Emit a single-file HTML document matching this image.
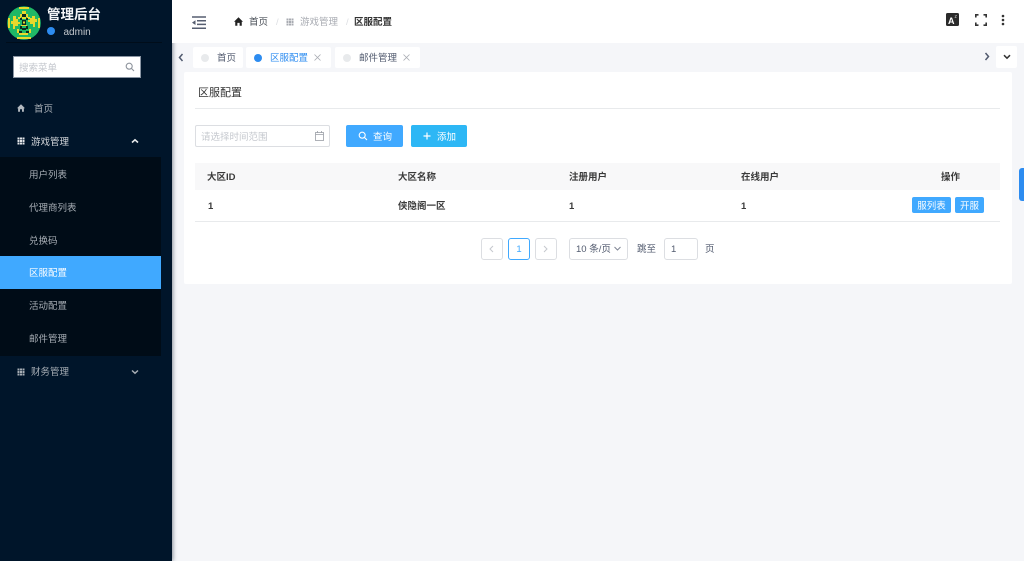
<!DOCTYPE html>
<html lang="zh"><head><meta charset="utf-8"><title>区服配置</title>
<style>
*{box-sizing:border-box;margin:0;padding:0}
html,body{width:1024px;height:561px;overflow:hidden;background:#f5f6f9;font-family:"Liberation Sans","Noto Sans CJK SC",sans-serif;color:#333}
.a{position:absolute;white-space:nowrap}
#side{position:absolute;left:0;top:0;width:172px;height:561px;background:#00152a;box-shadow:1px 0 4px rgba(0,21,41,.45)}
.m{position:absolute;font-size:9.5px;line-height:16px;white-space:nowrap;color:#a6adb4}
svg{position:absolute;display:block}
.tab{position:absolute;top:47px;height:21px;background:#fff;border-radius:2px;font-size:9.5px;line-height:24px;color:#515a6e}
.dot{position:absolute;top:6.500px;left:8px;width:8px;height:8px;border-radius:50%;background:#e8eaec}
.btn{position:absolute;height:22px;top:125px;border-radius:2px;color:#fff;font-size:9.5px;line-height:25px}
.th{position:absolute;font-size:9.5px;font-weight:700;color:#3a3a3a;line-height:16px;white-space:nowrap}
.pg{position:absolute;top:238px;height:22px;border:1px solid #dcdee2;border-radius:3px;background:#fff;font-size:9.5px;line-height:22px;color:#515a6e;text-align:center}
</style></head><body>
<div id="side">
<svg style="left:7px;top:6px" width="34" height="34" viewBox="0 0 34 34">
<circle cx="17" cy="17" r="16.8" fill="#1fb866"/>
<path d="M12 1h10v2H12zM1 12h2v10H1zM31 12h2v10h-2zM10 31h14v2H10z" fill="#e8d92c"/>
<path d="M6 10h3v3h2v3h2v2h-2v2H8v3H6v-5H4v-3h2zM25 10h3v3h2v3h-2v5h-2v-3h-3v-2h-2v-2h2v-2h2z" fill="#e8d92c"/>
<path d="M15 5h4v3h2v3h2v2h-3v-2h-6v2h-3v-2h2V8h2zM10 23h2v2h3v2h4v-2h3v-2h2v4h-3v2H12v-2h-2z" fill="#e8d92c"/>
<path d="M15 8h4v3h-4zM13 12h2v2h-2zM19 12h2v2h-2zM15 14h4v5h-4zM13 20h2v3h-2zM19 20h2v3h-2zM15 22h4v2h-4zM12 25h3v2h-3zM19 25h3v2h-3z" fill="#0b2a20"/>
<path d="M16 15.500h2v2h-2zM15 11h4v2h-4zM14 19h6v1h-6z" fill="#e8d92c"/>
</svg>
<div class="a" style="left:47px;top:6px;font-size:13.5px;line-height:18px;font-weight:700;color:#f4f6f8">管理后台</div>
<div class="a" style="left:47px;top:27px;width:8px;height:8px;border-radius:50%;background:#2d8cf0"></div>
<div class="a" style="left:63.500px;top:26px;font-size:10px;line-height:14px;color:#c3c8cd">admin</div>
<div class="a" style="left:6px;top:42px;width:156px;height:1px;background:#000d1a"></div>
<div class="a" style="left:13px;top:56px;width:128px;height:22px;background:#fff;border:1px solid #8a95a3"></div>
<div class="a" style="left:19px;top:61px;font-size:9.500px;line-height:16px;color:#c5c8ce">搜索菜单</div>
<svg style="left:125px;top:62px" width="10" height="10" viewBox="0 0 10 10" fill="none" stroke="#8d939c" stroke-width="1.100"><circle cx="4.200" cy="4.200" r="3"/><path d="M6.400 6.400L9 9"/></svg>

<svg style="left:17px;top:104px" width="8" height="8" viewBox="0 0 8 8"><path d="M4 .3L8 4.200H6.900V7.800H5V5.200H3v2.600H1.100V4.200H0z" fill="#b4bac0"/></svg>
<div class="m" style="left:34px;top:102px">首页</div>

<div class="a" style="left:0;top:157px;width:161px;height:199px;background:#000c17"></div>
<svg style="left:17px;top:137px" width="8" height="8" viewBox="0 0 8 8" fill="#e4e6e9"><path d="M.5 .5h2v2h-2zM3 .5h2v2H3zM5.500 .5h2v2h-2zM.5 3h2v2h-2zM3 3h2v2H3zM5.500 3h2v2h-2zM.5 5.500h2v2h-2zM3 5.500h2v2H3zM5.500 5.500h2v2h-2z"/></svg>
<div class="m" style="left:31px;top:135px;color:#d5d8dc">游戏管理</div>
<svg style="left:131px;top:138px" width="8" height="6" viewBox="0 0 8 6" fill="none" stroke="#e8eaec" stroke-width="1.600"><path d="M1 4.500L4 1.800 7 4.500"/></svg>
<div class="m" style="left:29px;top:168px">用户列表</div>
<div class="m" style="left:29px;top:201px">代理商列表</div>
<div class="m" style="left:29px;top:234px">兑换码</div>
<div class="a" style="left:0;top:256px;width:161px;height:33px;background:#40a9ff"></div>
<div class="m" style="left:29px;top:266px;color:#fff">区服配置</div>
<div class="m" style="left:29px;top:299px">活动配置</div>
<div class="m" style="left:29px;top:332px">邮件管理</div>
<svg style="left:17px;top:368px" width="8" height="8" viewBox="0 0 8 8" fill="#a6adb4"><path d="M.5 .5h2v2h-2zM3 .5h2v2H3zM5.500 .5h2v2h-2zM.5 3h2v2h-2zM3 3h2v2H3zM5.500 3h2v2h-2zM.5 5.500h2v2h-2zM3 5.500h2v2H3zM5.500 5.500h2v2h-2z"/></svg>
<div class="m" style="left:31px;top:365px">财务管理</div>
<svg style="left:131px;top:369px" width="8" height="6" viewBox="0 0 8 6" fill="none" stroke="#a6adb4" stroke-width="1.500"><path d="M1 1.500L4 4.200 7 1.500"/></svg>
</div>

<div class="a" style="left:172px;top:0;width:852px;height:43px;background:#fff"></div>
<svg style="left:192px;top:16px" width="14" height="14" viewBox="0 0 14 14" fill="none"><path d="M0 1h14M5 4.800h9M5 8.400h9M0 12.200h14" stroke="#565e70" stroke-width="1.500"/><path d="M3.500 4.200v4.800L0 6.600z" fill="#565e70"/></svg>
<svg style="left:234px;top:17px" width="9" height="9" viewBox="0 0 8 8"><path d="M4 .2L8 4.200H6.900V7.800H5V5.200H3v2.600H1.100V4.200H0z" fill="#222"/></svg>
<div class="a" style="left:249px;top:15px;font-size:9.500px;line-height:16px;color:#4a4f57">首页</div>
<div class="a" style="left:276px;top:15px;font-size:9.500px;line-height:16px;color:#dcdee2">/</div>
<svg style="left:286px;top:18px" width="8" height="8" viewBox="0 0 8 8" fill="#a8abb2"><path d="M.5 .5h2v2h-2zM3 .5h2v2H3zM5.500 .5h2v2h-2zM.5 3h2v2h-2zM3 3h2v2H3zM5.500 3h2v2h-2zM.5 5.500h2v2h-2zM3 5.500h2v2H3zM5.500 5.500h2v2h-2z"/></svg>
<div class="a" style="left:300px;top:15px;font-size:9.500px;line-height:16px;color:#a8abb2">游戏管理</div>
<div class="a" style="left:346px;top:15px;font-size:9.500px;line-height:16px;color:#dcdee2">/</div>
<div class="a" style="left:354px;top:15px;font-size:9.500px;line-height:16px;color:#333;font-weight:700">区服配置</div>

<div class="a" style="left:946px;top:13px;width:13px;height:13px;background:#2b2b2b;border-radius:1.500px"></div>
<div class="a" style="left:948px;top:16px;font-size:9px;line-height:10px;color:#fff;font-weight:700">A</div>
<div class="a" style="left:954.500px;top:14px;font-size:5px;line-height:6px;color:#ccc">z</div>
<svg style="left:975px;top:14px" width="12" height="12" viewBox="0 0 12 12" fill="none" stroke="#333" stroke-width="1.600"><path d="M.8 3.500V.8H3.500M8.500 .8h2.700V3.500M11.200 8.500v2.700H8.500M3.500 11.200H.8V8.500"/></svg>
<svg style="left:1001px;top:14px" width="4" height="12" viewBox="0 0 4 12" fill="#333"><circle cx="2" cy="2" r="1.300"/><circle cx="2" cy="6" r="1.300"/><circle cx="2" cy="10" r="1.300"/></svg>

<svg style="left:178px;top:53px" width="6" height="9" viewBox="0 0 6 9" fill="none" stroke="#515a6e" stroke-width="1.500"><path d="M4.500 1L1.500 4.500 4.500 8"/></svg>
<div class="tab" style="left:193px;width:50px"><span class="dot"></span><span class="a" style="left:24px">首页</span></div>
<div class="tab" style="left:246px;width:85px;color:#2d8cf0"><span class="dot" style="background:#2d8cf0"></span><span class="a" style="left:24px">区服配置</span><svg style="left:68px;top:7px" width="7" height="7" viewBox="0 0 7 7" stroke="#a8abb2" stroke-width=".8"><path d="M.5.5l6 6M6.500.5l-6 6"/></svg></div>
<div class="tab" style="left:335px;width:85px"><span class="dot"></span><span class="a" style="left:24px">邮件管理</span><svg style="left:68px;top:7px" width="7" height="7" viewBox="0 0 7 7" stroke="#a8abb2" stroke-width=".8"><path d="M.5.5l6 6M6.500.5l-6 6"/></svg></div>
<svg style="left:984px;top:52px" width="6" height="9" viewBox="0 0 6 9" fill="none" stroke="#515a6e" stroke-width="1.500"><path d="M1.500 1L4.500 4.500 1.500 8"/></svg>
<div class="a" style="left:996px;top:46px;width:21px;height:22px;background:#fff;border-radius:2px"></div>
<svg style="left:1003px;top:54px" width="8" height="6" viewBox="0 0 8 6" fill="none" stroke="#333" stroke-width="1.500"><path d="M1 1.200L4 4.200 7 1.200"/></svg>

<div class="a" style="left:184px;top:72px;width:828px;height:212px;background:#fff;border-radius:2px"></div>
<div class="a" style="left:198px;top:85px;font-size:11px;line-height:16px;color:#333">区服配置</div>
<div class="a" style="left:195px;top:108px;width:805px;height:1px;background:#e8eaec"></div>

<div class="a" style="left:195px;top:125px;width:135px;height:22px;border:1px solid #dcdee2;border-radius:2px;background:#fff"></div>
<div class="a" style="left:201px;top:130px;font-size:9.500px;line-height:16px;color:#c5c8ce">请选择时间范围</div>
<svg style="left:315px;top:131px" width="9" height="10" viewBox="0 0 9 10" fill="none" stroke="#9a9ea6" stroke-width=".8"><rect x=".5" y="1.500" width="8" height="8"/><path d="M.5 3.500h8M2.500 0v2M6.500 0v2"/></svg>

<div class="btn" style="left:346px;width:57px;background:#40a9ff"><span class="a" style="left:27px">查询</span></div>
<svg style="left:358px;top:131px" width="10" height="10" viewBox="0 0 10 10" fill="none" stroke="#fff" stroke-width="1.100"><circle cx="4.200" cy="4.200" r="3"/><path d="M6.400 6.400L9 9"/></svg>
<div class="btn" style="left:411px;width:56px;background:#2db7f5"><span class="a" style="left:26px">添加</span></div>
<svg style="left:423px;top:132px" width="8" height="8" viewBox="0 0 8 8" stroke="#fff" stroke-width="1.200"><path d="M4 .5v7M.5 4h7"/></svg>

<div class="a" style="left:195px;top:163px;width:805px;height:27px;background:#f8f8f9"></div>
<div class="th" style="left:207px;top:170px">大区ID</div>
<div class="th" style="left:398px;top:170px">大区名称</div>
<div class="th" style="left:569px;top:170px">注册用户</div>
<div class="th" style="left:741px;top:170px">在线用户</div>
<div class="th" style="left:941px;top:170px">操作</div>
<div class="th" style="left:208px;top:199px">1</div>
<div class="th" style="left:398px;top:199px">侠隐阁一区</div>
<div class="th" style="left:569px;top:199px">1</div>
<div class="th" style="left:741px;top:199px">1</div>
<div class="a" style="left:912px;top:197px;width:39px;height:16px;background:#40a9ff;border-radius:2px;color:#fff;font-size:9.500px;line-height:20px;text-align:center">服列表</div>
<div class="a" style="left:955px;top:197px;width:29px;height:16px;background:#40a9ff;border-radius:2px;color:#fff;font-size:9.500px;line-height:20px;text-align:center">开服</div>
<div class="a" style="left:195px;top:221px;width:805px;height:1px;background:#e8eaec"></div>

<div class="pg" style="left:481px;width:22px"></div>
<svg style="left:489px;top:245px" width="5" height="8" viewBox="0 0 5 8" fill="none" stroke="#c5c8ce"><path d="M4 1L1 4l3 3"/></svg>
<div class="pg" style="left:508px;width:22px;border-color:#40a9ff;color:#40a9ff">1</div>
<div class="pg" style="left:535px;width:22px"></div>
<svg style="left:543px;top:245px" width="5" height="8" viewBox="0 0 5 8" fill="none" stroke="#c5c8ce"><path d="M1 1l3 3-3 3"/></svg>
<div class="pg" style="left:569px;width:59px;text-align:left;padding-left:6px">10 条/页</div>
<svg style="left:614px;top:246px" width="7" height="5" viewBox="0 0 7 5" fill="none" stroke="#808695"><path d="M.5 1l3 3 3-3"/></svg>
<div class="a" style="left:637px;top:242px;font-size:9.500px;line-height:16px;color:#515a6e">跳至</div>
<div class="pg" style="left:664px;width:34px;text-align:left;padding-left:6px">1</div>
<div class="a" style="left:705px;top:242px;font-size:9.500px;line-height:16px;color:#515a6e">页</div>

<div class="a" style="left:1019px;top:168px;width:5px;height:33px;background:#2d8cf0;border-radius:3px 0 0 3px"></div>
</body></html>
